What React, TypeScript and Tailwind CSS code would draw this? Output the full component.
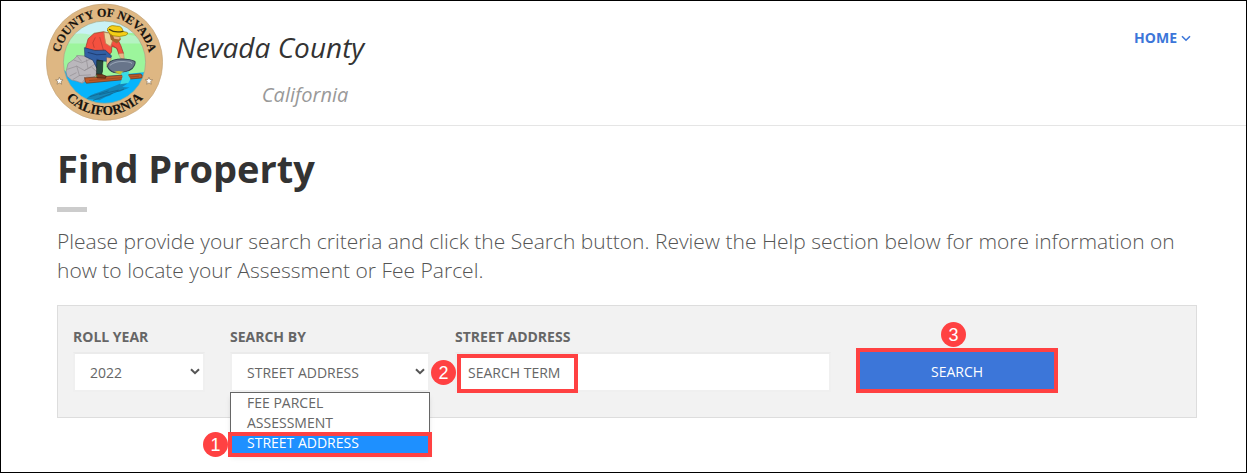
import type { ReactNode } from "react";

const labelClass = "block text-sm leading-5 font-bold text-[#666] whitespace-nowrap";
const fieldClass =
  "block h-10 w-full appearance-none border-2 border-[#f0f0f0] border-t-[#ebebeb] bg-white pt-px text-sm text-[#666] outline-none";
const searchOptions = ["FEE PARCEL", "ASSESSMENT", "STREET ADDRESS"];

function Step({ n, className }: { n: number; className: string }) {
  return (
    <span
      className={`absolute flex size-[25px] items-center justify-center rounded-full bg-[#ff4142] font-['Liberation_Sans',sans-serif] text-lg leading-none text-white ${className}`}
    >
      {n}
    </span>
  );
}

function Chevron({ className }: { className: string }) {
  return (
    <svg viewBox="0 0 10 7" className={className} fill="none" stroke="currentColor" aria-hidden="true">
      <path d="M1 1.2 5 5.2 9 1.2" />
    </svg>
  );
}

function SelectBox({ id, children }: { id: string; children: ReactNode }) {
  return (
    <div className="relative">
      <select id={id} className={`${fieldClass} pl-[15px]`}>
        {children}
      </select>
      <Chevron className="pointer-events-none absolute top-4 right-[5px] h-[7px] w-[10px] stroke-2 text-[#555]" />
    </div>
  );
}

function Seal() {
  return (
    <svg viewBox="18 9 350 353" className="h-[118px] w-[117px] shrink-0" role="img" aria-label="County of Nevada, California seal">
      <defs>
        <clipPath id="scene">
          <circle cx="193" cy="186" r="123" />
        </clipPath>
        <path id="arc-top" d="M57 186A136 136 0 0 1 329 186" />
        <path id="arc-bottom" d="M35 186A158 158 0 0 0 351 186" />
      </defs>
      <circle cx="193" cy="186" r="174" fill="#deb783" stroke="#c4a67c" strokeWidth="2" />
      <g clipPath="url(#scene)" strokeLinejoin="round" strokeLinecap="round">
        <rect x="68" y="60" width="250" height="250" fill="#9cf59c" />
        <path d="M68 60H318V112Q290 98 262 98Q180 118 68 98Z" fill="#c9f2f6" />
        <path d="M68 112Q110 94 150 104Q170 92 200 94L318 112V130H68Z" fill="#b4f3c2" />
        <path d="M62 195Q90 246 160 232L318 215V315H62Z" fill="#06b4fb" />
        <path d="M138 296Q150 282 176 276L212 262 250 246 262 250 246 260 268 262 240 274 222 276 210 286 196 290 178 300 160 298Z" fill="#1586b8" />
        <path d="M150 289 204 272M160 300 250 267M178 283 234 270" stroke="#0f5f88" strokeWidth="2" />
        <path d="M78 214 84 190 101 178 112 166 140 168 166 174 176 210 165 228 140 240 126 249 110 243 94 239 82 229Z" fill="#bab7bc" stroke="#8d898f" strokeWidth="2" />
        <path d="M102 180 125 188 150 177M83 207 110 198 133 211 168 190M110 198 118 226 151 224M118 226 100 237M133 211 154 200 170 215M110 166 124 183M90 227 108 218M139 179 143 202M126 247 139 230 160 231" fill="none" stroke="#918d92" strokeWidth="2" />
        <path d="M134 233 300 221Q308 223 306 233L139 249Q133 244 134 233Z" fill="#bd5a2a" stroke="#693719" strokeWidth="2" />
        <path d="M148 241 295 228" stroke="#8f4620" strokeWidth="2" />
        <path d="M136 145 144 116 162 100 190 95 210 100 232 116 242 137 250 160 236 162 229 143 215 139 214 156 201 171 171 151 164 151Z" fill="#f4503f" stroke="#9d3028" strokeWidth="2" />
        <path d="M165 113 158 128 162 142M179 112 190 151M213 132 232 148" fill="none" stroke="#ad392e" strokeWidth="2" />
        <path d="M134 143 164 151 195 150 214 167 207 184 174 181 183 199 170 204 158 180 135 169Z" fill="#325fa4" stroke="#1e3763" strokeWidth="2" />
        <path d="M144 157 170 164 197 162M170 177 188 185" fill="none" stroke="#203f75" strokeWidth="3" />
        <path d="M171 181 188 182 187 213 184 224 170 222Z" fill="#26483f" stroke="#151f1b" strokeWidth="2" />
        <path d="M170 222 184 222 198 228 196 234 172 233Z" fill="#7c3c1c" stroke="#3c1d0d" strokeWidth="2" />
        <path d="M192 97 207 99 218 119 211 139 197 130Z" fill="#ead49c" stroke="#a98e5f" strokeWidth="2" />
        <path d="M208 101 238 104 242 118 230 130 212 119Z" fill="#a4662c" />
        <path d="M218 105 240 107 237 118 222 116Z" fill="#e8b487" />
        <path d="M202 91Q200 84 207 80 214 74 229 78 240 77 245 84L249 94 261 97Q266 102 256 106 238 112 218 107 206 102 202 91Z" fill="#f4cf16" stroke="#8f760b" strokeWidth="2" />
        <path d="M208 88Q222 99 248 94" fill="none" stroke="#4d4612" strokeWidth="4" />
        <path d="M200 172 214 174 206 190 200 200ZM235 160 250 159 252 176 243 176Z" fill="#e8b487" stroke="#a86840" />
        <path d="M202 199Q204 180 232 177 268 175 284 184 287 192 276 205 252 222 222 217 206 211 202 199Z" fill="#68758a" stroke="#354151" strokeWidth="3" />
        <path d="M210 195Q225 182 250 184T274 190" fill="none" stroke="#97a4b5" strokeWidth="3" />
        <path d="M222 215Q236 210 250 215L240 223Z" fill="#c5c02e" />
        <path d="M243 218 267 213 264 225 271 236 264 248 240 252 247 229Z" fill="#38dce5" />
      </g>
      <circle cx="193" cy="186" r="123" fill="none" stroke="#b0a184" strokeWidth="2" />
      <g fill="#17130e" stroke="#17130e" strokeWidth="0.5" fontFamily="Liberation Serif, serif" fontWeight="700">
        <text textAnchor="middle" fontSize="36">
          <textPath href="#arc-top" startOffset="50%">COUNTY OF NEVADA</textPath>
        </text>
        <text textAnchor="middle" fontSize="40">
          <textPath href="#arc-bottom" startOffset="50%">CALIFORNIA</textPath>
        </text>
      </g>
      <g fill="#fff" stroke="#8e7656" strokeWidth="2">
        <path id="star" d="M58 231 61 238 69 239 63 244 65 252 58 248 51 252 53 244 47 239 55 238Z" />
        <use href="#star" x="268" />
      </g>
    </svg>
  );
}

export default function App() {
  return (
    <div className="min-h-screen border border-black bg-white font-['Open_Sans',sans-serif] text-[#333]">
      <header className="flex h-[125px] items-start justify-between border-b border-[#e5e5e5] pr-[55px] pl-[45px]">
        <div className="flex gap-[13px] pt-0.5">
          <Seal />
          <div className="flex flex-col pt-[22px] italic">
            <span className="text-[28px] leading-[44px] whitespace-nowrap text-[#333]">Nevada County</span>
            <span className="pt-1.5 pr-4 text-right text-xl leading-[40px] text-[#999]">California</span>
          </div>
        </div>
        <nav className="pt-[27px]">
          <a href="#home" className="flex items-center gap-1 text-sm leading-5 font-bold text-[#3c76d9]">
            HOME
            <Chevron className="h-[7px] w-[10px] stroke-[1.6]" />
          </a>
        </nav>
      </header>

      <main className="pr-[49px] pl-14">
        <h1 className="pt-[15px] text-[38px] leading-[54px] font-bold">Find Property</h1>
        <div className="mt-3 h-[5px] w-[30px] bg-[#ccc]" />
        <p className="mt-[15px] text-[21px] leading-[29px] font-light text-[#555]">
          Please provide your search criteria and click the Search button. Review the Help section below for more
          information on how to locate your Assessment or Fee Parcel.
        </p>

        <form
          className="mt-5 grid grid-cols-[132fr_200fr_376fr_202fr_98fr] gap-x-[25px] border border-[#ddd] bg-[#f2f2f2] px-[15px] pt-[21px] pb-6"
          onSubmit={(e) => e.preventDefault()}
        >
          <div className="flex flex-col gap-[5px]">
            <label htmlFor="year" className={labelClass}>ROLL YEAR</label>
            <SelectBox id="year">
              <option>2022</option>
            </SelectBox>
          </div>

          <div className="flex flex-col gap-[5px]">
            <label htmlFor="by" className={labelClass}>SEARCH BY</label>
            <div className="relative">
              <SelectBox id="by">
                <option>STREET ADDRESS</option>
                <option>FEE PARCEL</option>
                <option>ASSESSMENT</option>
              </SelectBox>
              <ul
                role="listbox"
                aria-label="Search by"
                className="absolute top-10 right-0 left-0 border border-[#666] bg-white text-sm leading-5 text-[#666] shadow-md"
              >
                {searchOptions.map((option) => (
                  <li
                    key={option}
                    role="option"
                    aria-selected={option === "STREET ADDRESS"}
                    className="relative pl-4 aria-selected:bg-[#1e90ff] aria-selected:text-white"
                  >
                    {option === "STREET ADDRESS" && (
                      <>
                        <span className="absolute -inset-x-[3px] -top-px -bottom-1 border-4 border-[#ff4142] bg-[#1e90ff]" />
                        <Step n={1} className="-top-px -left-7" />
                      </>
                    )}
                    <span className="relative">{option}</span>
                  </li>
                ))}
              </ul>
            </div>
          </div>

          <div className="flex flex-col gap-[5px]">
            <label htmlFor="term" className={labelClass}>STREET ADDRESS</label>
            <div className="relative">
              <input id="term" type="text" defaultValue="SEARCH TERM" className={`${fieldClass} pl-[11px]`} />
              <span className="pointer-events-none absolute top-[2px] left-[2px] h-[39px] w-[121px] border-4 border-[#ff4142]" />
              <Step n={2} className="top-2 -left-6" />
            </div>
          </div>

          <div className="relative flex flex-col pt-[21px]">
            <button type="submit" className="h-[45px] w-full border-4 border-[#ff4142] bg-[#3c76d9] pt-0.5 text-sm text-white">
              SEARCH
            </button>
            <Step n={3} className="-top-[5px] left-[85px]" />
          </div>
        </form>
      </main>
    </div>
  );
}
